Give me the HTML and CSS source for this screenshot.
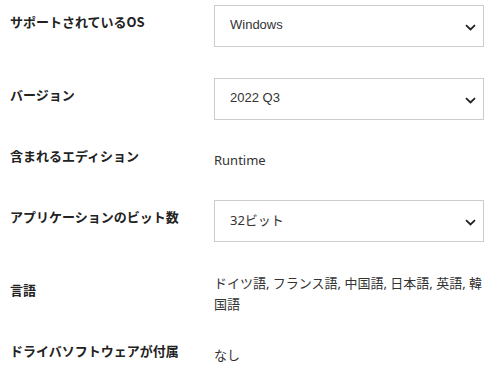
FILE: index.html
```html
<!DOCTYPE html>
<html>
<head>
<meta charset="utf-8">
<link rel="stylesheet" href="styles.css">
</head>
<body>

<div class="specs">
  <div class="row">
    <div class="label">サポートされているOS</div>
    <div class="select">
      <span>Windows</span>
      <svg class="chev" width="11" height="7" viewBox="0 0 11 7"><path d="M1 1.2 L5.5 5.5 L10 1.2" fill="none" stroke="#222" stroke-width="1.8"/></svg>
    </div>
  </div>

  <div class="row">
    <div class="label">バージョン</div>
    <div class="select">
      <span>2022 Q3</span>
      <svg class="chev" width="11" height="7" viewBox="0 0 11 7"><path d="M1 1.2 L5.5 5.5 L10 1.2" fill="none" stroke="#222" stroke-width="1.8"/></svg>
    </div>
  </div>

  <div class="row">
    <div class="label">含まれるエディション</div>
    <div class="value single">Runtime</div>
  </div>

  <div class="row">
    <div class="label">アプリケーションのビット数</div>
    <div class="select">
      <span class="jp">32ビット</span>
      <svg class="chev" width="11" height="7" viewBox="0 0 11 7"><path d="M1 1.2 L5.5 5.5 L10 1.2" fill="none" stroke="#222" stroke-width="1.8"/></svg>
    </div>
  </div>

  <div class="row">
    <div class="label">言語</div>
    <div class="value">ドイツ語, フランス語, 中国語, 日本語, 英語, 韓国語</div>
  </div>

  <div class="row">
    <div class="label">ドライバソフトウェアが付属</div>
    <div class="value single">なし</div>
  </div>
</div>

</body>
</html>
```

FILE: styles.css
```css
body {
  margin: 0;
  font-family: "Noto Sans", "Noto Sans CJK JP", sans-serif;
  color: #333;
  background: #fff;
}

.specs {
  padding: 5px 15px 0 10px;
  display: flex;
  flex-direction: column;
  gap: 31px;
}

.row {
  display: flex;
  align-items: center;
}

.label {
  width: 204px;
  flex-shrink: 0;
  font-family: "Noto Sans CJK JP", sans-serif;
  font-size: 13px;
  font-weight: bold;
  line-height: 20px;
  color: #222;
  margin-top: -8px;
}

.value {
  width: 272px;
  font-size: 13px;
  line-height: 21px;
  color: #333;
}

.value.single {
  line-height: 18px;
}

.select {
  width: 270px;
  height: 42px;
  box-sizing: border-box;
  border: 1px solid #ccc;
  display: flex;
  align-items: center;
  justify-content: space-between;
  padding: 0 7px 0 15px;
  font-family: "Liberation Sans", Arial, sans-serif;
  font-size: 13px;
  color: #333;
}

.select span {
  margin-top: -3px;
}

.select .jp {
  font-family: "Noto Sans", "Noto Sans CJK JP", sans-serif;
}

.chev {
  margin-top: 2px;
}
```
